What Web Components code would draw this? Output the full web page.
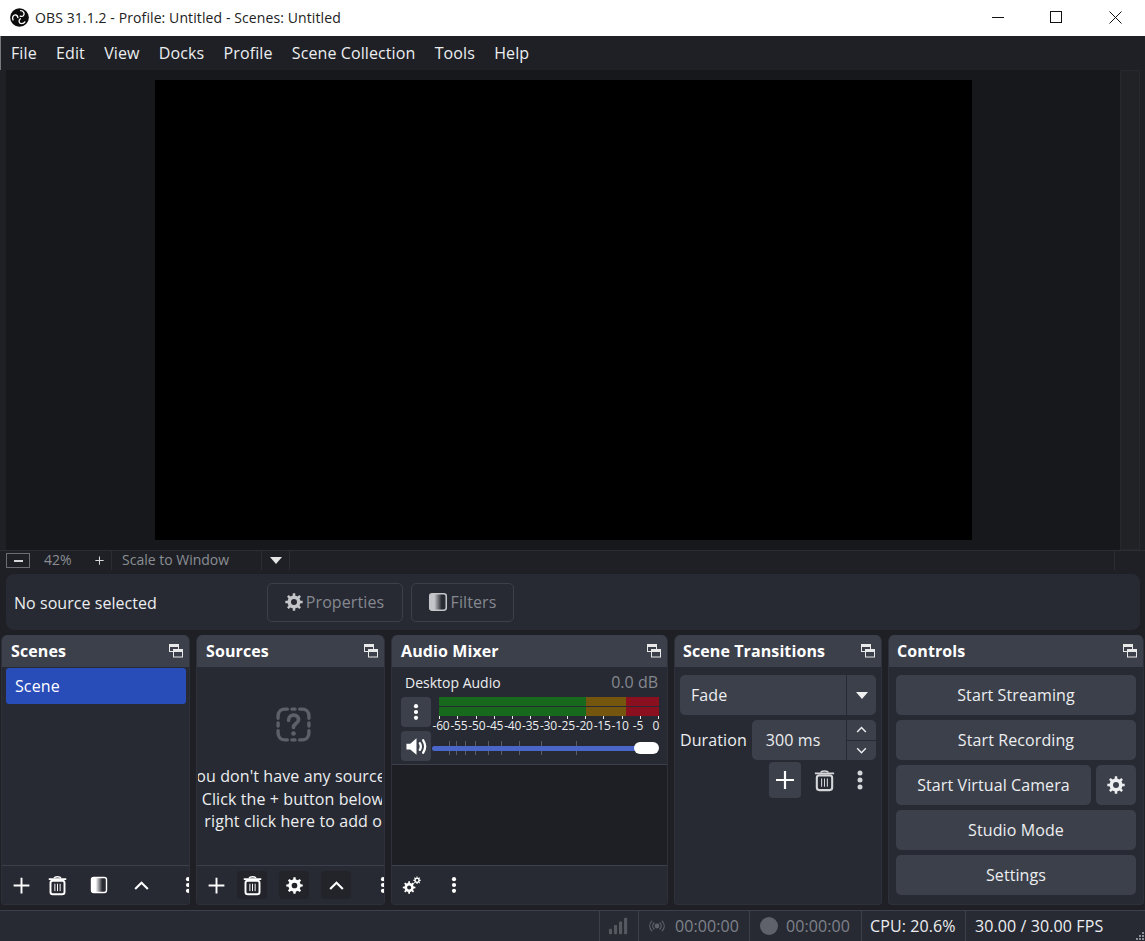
<!DOCTYPE html>
<html>
<head>
<meta charset="utf-8">
<title>OBS 31.1.2</title>
<style>
  html, body { margin: 0; height: 100%; background: #1e2025; }
  body { font-family: "Open Sans", "Noto Sans", sans-serif; font-size: 16px; letter-spacing: .1px; color: #fff; overflow: hidden; }
  obs-window { width: 1145px; height: 941px; }
</style>
</head>
<body>
<obs-window>
  <obs-titlebar></obs-titlebar>
  <obs-menubar></obs-menubar>
  <obs-preview></obs-preview>
  <obs-zoombar></obs-zoombar>
  <obs-context></obs-context>
  <obs-docks>
    <obs-dock title="Scenes"><obs-scenes></obs-scenes></obs-dock>
    <obs-dock title="Sources"><obs-sources></obs-sources></obs-dock>
    <obs-dock title="Audio Mixer"><obs-mixer></obs-mixer></obs-dock>
    <obs-dock title="Scene Transitions"><obs-transitions></obs-transitions></obs-dock>
    <obs-dock title="Controls"><obs-controls></obs-controls></obs-dock>
  </obs-docks>
  <obs-statusbar></obs-statusbar>
</obs-window>

<script>
// builds a cog outline, the hole is cut with evenodd
function gearPath(cx, cy, ro, ri, hole, n) {
  let d = '';
  const step = Math.PI * 2 / n;
  for (let i = 0; i < n; i++) {
    const a = i * step;
    const pts = [[ri, a - step * 0.5], [ri, a - step * 0.27], [ro, a - step * 0.17], [ro, a + step * 0.17], [ri, a + step * 0.27]];
    pts.forEach((p, j) => {
      const x = cx + p[0] * Math.cos(p[1]);
      const y = cy + p[0] * Math.sin(p[1]);
      d += (i === 0 && j === 0 ? 'M' : 'L') + x.toFixed(2) + ' ' + y.toFixed(2);
    });
  }
  d += 'Z';
  d += `M${cx - hole} ${cy}a${hole} ${hole} 0 1 0 ${hole * 2} 0a${hole} ${hole} 0 1 0 ${-hole * 2} 0Z`;
  return d;
}

const BLADE = 'M11.200 10.200C14.500 8.500 14 4.500 10.500 3.800C8.800 3.500 7.300 4.200 6.300 5.400';

const ICONS = {
  plus: '<path d="M12 3v18M3 12h18" stroke="currentColor" stroke-width="2.2" fill="none"/>',
  trash: `<g fill="none" stroke="currentColor">
      <path d="M2 4.600h20" stroke-width="2"/>
      <path d="M8 3.600c.5-1.200 1.500-1.600 4-1.600s3.500 .4 4 1.600" stroke-width="1.600"/>
      <rect x="4" y="6.600" width="16" height="15.400" rx="2.600" stroke-width="2.200"/>
      <path d="M9 10v8.400M12 10v8.400M15 10v8.400" stroke-width="1.100"/></g>`,
  filter: `<defs><linearGradient id="fg"><stop offset="0" stop-color="currentColor"/><stop offset=".28" stop-color="currentColor"/><stop offset=".72" stop-color="#2a2c34"/><stop offset="1" stop-color="#2a2c34"/></linearGradient></defs>
      <rect x="3" y="3" width="18" height="18" rx="2.600" fill="url(#fg)" stroke="currentColor" stroke-width="1.700"/>`,
  up: '<path d="M4 16.500l8-8 8 8" stroke="currentColor" stroke-width="2.600" fill="none"/>',
  down: '<path d="M4 8l8 8 8-8" stroke="currentColor" stroke-width="2.600" fill="none"/>',
  dots: '<circle cx="12" cy="5" r="2.500" fill="currentColor"/><circle cx="12" cy="12" r="2.500" fill="currentColor"/><circle cx="12" cy="19" r="2.500" fill="currentColor"/>',
  gear: `<path fill="currentColor" fill-rule="evenodd" d="${gearPath(12, 12, 10.5, 7.8, 3.6, 8)}"/>`,
  gears: `<path fill="currentColor" fill-rule="evenodd" d="${gearPath(9, 14.5, 8, 5.8, 2.6, 8)}"/>
      <path fill="currentColor" fill-rule="evenodd" d="${gearPath(19, 5.5, 4.8, 3.4, 1.7, 8)}"/>`,
  question: `<g fill="none" stroke="currentColor" stroke-width="2.200" stroke-linecap="round">
      <path d="M8 2H6.500C3.800 2 2 3.800 2 6.500V8M2 16v1.500C2 20.200 3.800 22 6.500 22H8M16 2h1.500C20.200 2 22 3.800 22 6.500V8M22 16v1.500c0 2.700-1.800 4.500-4.500 4.500H16M11 2h2M11 22h2M2 11v2M22 11v2"/>
      <path d="M8.800 9.200c0-2 1.400-3.300 3.300-3.300s3.200 1.200 3.200 2.900c0 2.600-3.300 2.500-3.300 5" stroke-width="2.400"/></g>
      <circle cx="12" cy="17.800" r="1.500" fill="currentColor"/>`,
  speaker: `<path fill="currentColor" d="M1.500 9h4l6.500-5.500v17L5.500 15h-4z"/>
      <path d="M15.500 8.500c1.300 2.200 1.300 4.800 0 7M19 5.500c2.500 4 2.500 9 0 13" fill="none" stroke="currentColor" stroke-width="2.400" stroke-linecap="round"/>`,
  float: `<g fill="none" stroke="currentColor" stroke-width="1">
      <rect x=".5" y=".5" width="9" height="7"/><path d="M0 2h10" stroke-width="2"/>
      <rect x="4.500" y="5.500" width="9" height="7.500" fill="var(--float-bg, #3c404b)"/><path d="M4 7h10" stroke-width="2"/></g>`,
  signal: `<rect x="1" y="15" width="3.400" height="6" rx="1" fill="currentColor"/><rect x="6.500" y="11" width="3.400" height="10" rx="1" fill="currentColor"/>
      <rect x="12" y="7" width="3.400" height="14" rx="1" fill="currentColor"/><rect x="17.500" y="3" width="3.400" height="18" rx="1" fill="currentColor"/>`,
  broadcast: `<circle cx="12" cy="12" r="3.600" fill="currentColor"/>
      <g fill="none" stroke="currentColor" stroke-width="1.800" stroke-linecap="round">
      <path d="M7.500 7.500c-2.400 2.500-2.400 6.500 0 9M16.500 7.500c2.400 2.500 2.400 6.500 0 9M4.200 4.800c-4 4.300-4 10.100 0 14.400M19.800 4.800c4 4.300 4 10.100 0 14.400"/></g>`,
  logo: `<circle cx="12" cy="12" r="11.800" fill="#0c0c0c"/>
      <g fill="none" stroke="#fff" stroke-width="1.700" stroke-linecap="round">
      <path d="${BLADE}" transform="rotate(50 12 12)"/>
      <path d="${BLADE}" transform="rotate(170 12 12)"/>
      <path d="${BLADE}" transform="rotate(290 12 12)"/></g>`
};

function define(tag, css, html) {
  customElements.define(tag, class extends HTMLElement {
    constructor() {
      super();
      this.attachShadow({ mode: 'open' }).innerHTML = `<style>${css}</style>${typeof html === 'function' ? html(this) : html}`;
    }
  });
}

class ObsIcon extends HTMLElement {
  connectedCallback() {
    const size = this.getAttribute('size') || 20;
    const name = this.getAttribute('name');
    const box = name === 'float' ? '0 0 14 14' : '0 0 24 24';
    this.attachShadow({ mode: 'open' }).innerHTML = `
      <style>:host { display: inline-flex; flex: none; } svg { display: block; }</style>
      <svg width="${size}" height="${size}" viewBox="${box}">${ICONS[name]}</svg>`;
  }
}
customElements.define('obs-icon', ObsIcon);

define('obs-window', `:host { display: flex; flex-direction: column; box-sizing: border-box; background: #1e2025; overflow: hidden; }`, `<slot></slot>`);

define('obs-titlebar', `
  :host { display: flex; align-items: center; height: 36px; flex: none; box-sizing: border-box; padding: 0 0 2px 10px; background: #fff; color: #222; font-size: 14px; }
  .t { margin-left: 6px; flex: 1; white-space: nowrap; letter-spacing: .1px; }
  .b { width: 60px; display: flex; align-items: center; justify-content: center; }
`, `
  <obs-icon name="logo" size="19"></obs-icon>
  <span class="t">OBS 31.1.2 - Profile: Untitled - Scenes: Untitled</span>
  <span class="b" style="padding-left:6px;box-sizing:border-box"><svg width="12" height="12"><path d="M0 6.500h12" stroke="#111"/></svg></span>
  <span class="b" style="padding-left:2px;box-sizing:border-box"><svg width="12" height="12"><rect x=".5" y=".5" width="11" height="11" fill="none" stroke="#111"/></svg></span>
  <span class="b"><svg width="13" height="13"><path d="M.5.500l12 12M12.500.500l-12 12" stroke="#111" fill="none"/></svg></span>
`);

define('obs-menubar', `
  :host { display: flex; height: 34px; flex: none; align-items: center; gap: 19.300px; padding-left: 10px; border-left: 1px solid #77797c; background: #1e2025; color: #eceef0; font-size: 16px; box-sizing: border-box; letter-spacing: .1px; }
`, ['File', 'Edit', 'View', 'Docks', 'Profile', 'Scene Collection', 'Tools', 'Help'].map(m => `<span>${m}</span>`).join(''));

define('obs-preview', `
  :host { display: flex; height: 480px; flex: none; padding: 0 5px 0 6px; box-sizing: border-box; }
  .view { flex: 1; background: #17181c; display: flex; align-items: center; justify-content: center; }
  .canvas { width: 817px; height: 460px; background: #000; }
  .vbar { width: 20px; background: #202226; border: 1px solid #26282d; box-sizing: border-box; }
`, `<div class="view"><div class="canvas"></div></div><div class="vbar"></div>`);

define('obs-zoombar', `
  :host { display: flex; height: 20px; flex: none; align-items: center; padding: 0 5px 0 6px; box-sizing: border-box; font-size: 14px; letter-spacing: 0; color: #8b8e94; border-top: 1px solid #2b2d33; }
  .minus { width: 24px; height: 15px; border: 1px solid #6a6d74; box-sizing: border-box; display: flex; align-items: center; justify-content: center; }
  .minus i { width: 9px; height: 2px; background: #d6d7d9; }
  .pct { margin-left: 14px; width: 50px; margin-top: -2px; }
  .plus { width: 17px; }
  .combo { display: flex; align-items: center; height: 19px; border-left: 1px solid #2b2d33; padding: 0 0 2px 10px; width: 150px; box-sizing: border-box; white-space: nowrap; }
  .arrow { width: 29px; height: 19px; display: flex; align-items: center; justify-content: center; border-left: 1px solid #2b2d33; border-right: 1px solid #2b2d33; box-sizing: border-box; }
  .arrow i { border: 6px solid transparent; border-top: 7px solid #e6e6e6; border-bottom: 0; }
  .hbar { flex: 1; height: 19px; margin-right: 25px; border-right: 1px solid #2b2d33; }
`, `
  <div class="minus"><i></i></div><span class="pct">42%</span>
  <obs-icon class="plus" name="plus" size="11" style="color:#d6d7d9"></obs-icon>
  <div class="combo">Scale to Window</div><div class="arrow"><i></i></div><div class="hbar"></div>
`);

define('obs-context', `
  :host { display: flex; align-items: center; height: 56px; flex: none; margin: 4px 5px 5px 6px; background: #272a33; border-radius: 8px; padding-left: 8px; font-size: 16px; color: #eceef0; }
  .lbl { width: 253px; white-space: nowrap; padding-top: 1px; letter-spacing: .05px; }
  .btn { display: flex; align-items: center; justify-content: center; gap: 2px; height: 39px; box-sizing: border-box; border: 1px solid #3c404b; border-radius: 5px; color: #85888f; padding-right: 2px; }
  .p { width: 136px; margin-right: 8px; }
  .f { width: 103px; }
`, `
  <span class="lbl">No source selected</span>
  <div class="btn p"><obs-icon name="gear" size="20" style="color:#c4c5c8"></obs-icon>Properties</div>
  <div class="btn f"><obs-icon name="filter" size="22" style="color:#c4c5c8"></obs-icon>Filters</div>
`);

define('obs-docks', `
  :host { display: grid; grid-template-columns: 189px 189px 277px 208px 256px; column-gap: 6px; height: 270px; flex: none; padding-left: 1px; }
  ::slotted(*) { min-width: 0; }
`, `<slot></slot>`);

define('obs-dock', `
  :host { display: flex; flex-direction: column; background: #272a33; border-radius: 6px 6px 4px 4px; overflow: hidden; border: 1px solid #2e3139; border-top: 0; box-sizing: border-box; min-height: 0; }
  .head { display: flex; align-items: center; justify-content: space-between; height: 32px; flex: none; padding: 0 6px 0 9px; background: #3c404b; font-weight: 700; color: #fff; font-size: 16px; white-space: nowrap; }
  :host([title="Scene Transitions"]) .head, :host([title="Controls"]) .head { padding-left: 8px; }
  .body { flex: 1; min-height: 0; display: flex; flex-direction: column; }
  ::slotted(*) { flex: 1; min-height: 0; }
`, el => `
  <div class="head"><span>${el.getAttribute('title')}</span><obs-icon name="float" size="14" style="color:#e8e8e8"></obs-icon></div>
  <div class="body"><slot></slot></div>
`);

define('obs-toolbar', `
  :host { display: flex; align-items: center; height: 39px; flex: none; border-top: 1px solid #3c404b; box-sizing: border-box; padding-left: 4px; overflow: hidden; color: #fff; background: #272a33; }
`, `<slot></slot>`);

define('obs-toolbtn', `
  :host { display: flex; align-items: center; justify-content: center; width: 30px; height: 28px; flex: none; border-radius: 4px; margin-left: var(--ml, 0); }
  :host([dark]) { background: #22242a; }
  :host([raised]) { background: #3c404b; width: 32px; height: 36px; }
`, `<slot></slot>`);

define('obs-scenes', `
  :host { display: flex; flex-direction: column; }
  .list { flex: 1; padding-top: 1px; }
  .item { margin: 0 3px 0 4px; height: 36px; display: flex; align-items: center; padding-left: 9px; background: #284cb8; border-radius: 3px; color: #fff; }
`, `
  <div class="list"><div class="item">Scene</div></div>
  <obs-toolbar>
    <obs-toolbtn><obs-icon name="plus" size="21"></obs-icon></obs-toolbtn>
    <obs-toolbtn style="--ml:6px"><obs-icon name="trash" size="21"></obs-icon></obs-toolbtn>
    <obs-toolbtn style="--ml:12px"><obs-icon name="filter" size="20"></obs-icon></obs-toolbtn>
    <obs-toolbtn style="--ml:12px"><obs-icon name="up" size="19"></obs-icon></obs-toolbtn>
    <obs-toolbtn style="--ml:17px"><obs-icon name="dots" size="20"></obs-icon></obs-toolbtn>
  </obs-toolbar>
`);

define('obs-sources', `
  :host { display: flex; flex-direction: column; }
  .empty { flex: 1; display: flex; flex-direction: column; align-items: center; overflow: hidden; color: #eceef0; margin: 0 2px 0 1px; min-height: 0; }
  .q { margin-top: 39px; margin-bottom: 22px; color: #5d6068; margin-left: 7px; }
  .line { flex: none; white-space: nowrap; height: 22.500px; line-height: 22.500px; margin-left: 5px; }
  .second { margin-left: 10px; }
  .third { margin-left: 9px; clip-path: inset(0 0 0 19px); }
`, `
  <div class="empty">
    <obs-icon class="q" name="question" size="37"></obs-icon>
    <span class="line">You don't have any sources.</span>
    <span class="line second">Click the + button below,</span>
    <span class="line third">or right click here to add one.</span>
  </div>
  <obs-toolbar>
    <obs-toolbtn><obs-icon name="plus" size="21"></obs-icon></obs-toolbtn>
    <obs-toolbtn dark style="--ml:6px"><obs-icon name="trash" size="21"></obs-icon></obs-toolbtn>
    <obs-toolbtn dark style="--ml:12px"><obs-icon name="gear" size="19"></obs-icon></obs-toolbtn>
    <obs-toolbtn dark style="--ml:12px"><obs-icon name="up" size="19"></obs-icon></obs-toolbtn>
    <obs-toolbtn style="--ml:17px"><obs-icon name="dots" size="20"></obs-icon></obs-toolbtn>
  </obs-toolbar>
`);

define('obs-mixer', `
  :host { display: flex; flex-direction: column; }
  .strip { height: 98px; flex: none; box-sizing: border-box; border-bottom: 1px solid #3c404b; padding: 0 8px 0 9px; }
  .names { display: flex; justify-content: space-between; align-items: center; height: 30px; padding: 0 1px 0 4px; font-size: 14px; letter-spacing: 0; color: #eceef0; }
  .names b { font-weight: 400; font-size: 16px; color: #85888f; }
  .row { display: flex; gap: 8px; height: 30px; }
  .btn { width: 30px; height: 30px; background: #3c404b; border-radius: 4px; display: flex; align-items: center; justify-content: center; flex: none; }
  .meter { width: 220px; }
  .bar { height: 19px; position: relative; display: flex; }
  .bar i:nth-child(1) { width: 147px; background: #16691d; }
  .bar i:nth-child(2) { width: 40px; background: #75560f; }
  .bar i:nth-child(3) { flex: 1; background: #8a1020; }
  .bar::after { content: ""; position: absolute; left: 0; right: 0; top: 9px; height: 1px; background: #272a33; }
  .ticks, .scale { display: flex; justify-content: space-between; }
  .ticks { height: 3px; }
  .ticks i { width: 1px; background: #e8e8e8; }
  .scale { height: 14px; font-size: 12px; line-height: 14px; color: #eceef0; letter-spacing: -.2px; }
  .scale span { width: 0; display: flex; justify-content: center; white-space: nowrap; }
  .scale span:first-child { margin-left: 2px; }
  .scale span:last-child { margin-right: 3px; }
  .slider { flex: 1; height: 30px; position: relative; margin-left: 1px; }
  .track { position: absolute; left: 0; right: 6px; top: 15px; height: 5px; background: #4a66c8; border-radius: 3px; }
  .thumb { position: absolute; right: 0; top: 11px; width: 25px; height: 12px; background: #fff; border-radius: 6px; }
  .slider u { position: absolute; top: 10px; height: 14px; width: 1px; background: #5a5d66; }
  .rest { flex: 1; background: #1d1f24; min-height: 0; }
`, `
  <div class="strip">
    <div class="names"><span>Desktop Audio</span><b>0.0 dB</b></div>
    <div class="row">
      <div class="btn"><obs-icon name="dots" size="20"></obs-icon></div>
      <div class="meter">
        <div class="bar"><i></i><i></i><i></i></div>
        <div class="ticks">${'<i></i>'.repeat(13)}</div>
        <div class="scale">${[-60, -55, -50, -45, -40, -35, -30, -25, -20, -15, -10, -5, 0].map(n => `<span>${n}</span>`).join('')}</div>
      </div>
    </div>
    <div class="row" style="gap:0;margin-top:4px">
      <div class="btn"><obs-icon name="speaker" size="23"></obs-icon></div>
      <div class="slider">
        ${[17, 24, 33, 43, 56, 69, 87, 109, 144].map(x => `<u style="left:${x}px"></u>`).join('')}
        <div class="track"></div><div class="thumb"></div>
      </div>
    </div>
  </div>
  <div class="rest"></div>
  <obs-toolbar>
    <obs-toolbtn><obs-icon name="gears" size="19"></obs-icon></obs-toolbtn>
    <obs-toolbtn style="--ml:13px"><obs-icon name="dots" size="20"></obs-icon></obs-toolbtn>
  </obs-toolbar>
`);

define('obs-transitions', `
  :host { display: flex; flex-direction: column; gap: 5px; padding: 8px 5px 0 5px; box-sizing: border-box; }
  .box { display: flex; height: 40px; background: #3c404b; border-radius: 5px; align-items: center; color: #eceef0; flex: none; }
  .txt { flex: 1; padding-left: 11px; }
  .arrow { width: 29px; height: 100%; border-left: 1px solid #272a33; display: flex; align-items: center; justify-content: center; }
  .arrow i { border: 6px solid transparent; border-top: 7px solid #f0f0f0; border-bottom: 0; }
  .row { display: flex; align-items: center; gap: 5px; }
  .row > span { color: #eceef0; }
  .row .box { flex: 1; }
  .row .txt { padding-left: 14px; }
  .spin { width: 29px; height: 100%; border-left: 1px solid #272a33; display: flex; flex-direction: column; }
  .spin div { flex: 1; display: flex; align-items: center; justify-content: center; }
  .spin div + div { border-top: 1px solid #272a33; }
  .tools { display: flex; align-items: center; justify-content: flex-end; padding-right: 1px; margin-top: -3px; gap: 6px; }
  .tools obs-toolbtn[raised] { margin-right: 2px; }
`, `
  <div class="box"><span class="txt">Fade</span><div class="arrow"><i></i></div></div>
  <div class="row"><span>Duration</span><div class="box"><span class="txt">300 ms</span>
    <div class="spin"><div><obs-icon name="up" size="13"></obs-icon></div><div><obs-icon name="down" size="13"></obs-icon></div></div></div></div>
  <div class="tools">
    <obs-toolbtn raised><obs-icon name="plus" size="24"></obs-icon></obs-toolbtn>
    <obs-toolbtn><obs-icon name="trash" size="23" style="color:#d4d5d8"></obs-icon></obs-toolbtn>
    <obs-toolbtn><obs-icon name="dots" size="24" style="color:#d4d5d8"></obs-icon></obs-toolbtn>
  </div>
`);

define('obs-controls', `
  :host { display: flex; flex-direction: column; gap: 5px; padding: 8px 7px 0 7px; box-sizing: border-box; }
  .btn { display: flex; align-items: center; justify-content: center; height: 40px; background: #3c404b; border-radius: 5px; color: #eceef0; flex: none; }
  .row { display: flex; gap: 5px; }
  .row .btn:first-child { flex: 1; }
  .cog { width: 40px; }
`, `
  <div class="btn">Start Streaming</div>
  <div class="btn">Start Recording</div>
  <div class="row"><div class="btn">Start Virtual Camera</div><div class="btn cog"><obs-icon name="gear" size="20"></obs-icon></div></div>
  <div class="btn">Studio Mode</div>
  <div class="btn">Settings</div>
`);

define('obs-statusbar', `
  :host { display: flex; align-items: center; justify-content: flex-end; height: 31px; flex: none; margin-top: 5px; background: #272a33; border-top: 1px solid #3c404b; box-sizing: border-box; font-size: 16px; color: #eceef0; position: relative; white-space: nowrap; }
  .cell { display: flex; align-items: center; height: 100%; box-sizing: border-box; border-left: 1px solid #3c404b; }
  .dim { color: #7f828a; }
  .sig { width: 39px; padding-left: 8px; }
  .str { width: 111px; padding-left: 10px; gap: 10px; }
  .rec { width: 112px; padding-left: 10px; gap: 8px; }
  .rec i { width: 18px; height: 18px; border-radius: 50%; background: #5f626b; }
  .cpu { width: 104px; padding-left: 8px; }
  .fps { width: 180px; padding-left: 9px; }
  .grip { position: absolute; right: 0; bottom: 0; width: 10px; height: 10px; }
`, `
  <div class="cell sig dim"><obs-icon name="signal" size="22" style="color:#55585f"></obs-icon></div>
  <div class="cell str dim"><obs-icon name="broadcast" size="16" style="color:#5f626b"></obs-icon><span>00:00:00</span></div>
  <div class="cell rec dim"><i></i><span>00:00:00</span></div>
  <div class="cell cpu">CPU: 20.6%</div>
  <div class="cell fps">30.00 / 30.00 FPS</div>
  <svg class="grip" viewBox="0 0 10 10"><path d="M7 1h2v2H7zM4 4h2v2H4zM7 4h2v2H7zM1 7h2v2H1zM4 7h2v2H4zM7 7h2v2H7z" fill="#8b8e94"/></svg>
`);
</script>
</body>
</html>
